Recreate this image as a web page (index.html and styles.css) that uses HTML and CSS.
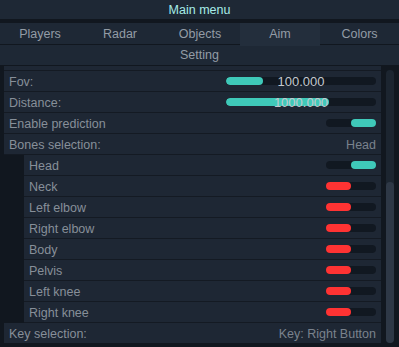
FILE: index.html
```html
<!DOCTYPE html>
<html lang="en">
<head>
    <meta charset="UTF-8">
    <title>Main menu</title>
    <link rel="stylesheet" href="styles.css">
</head>
<body>
    <div class="title">Main menu</div>

    <div class="tabs">
        <div class="tab">Players</div>
        <div class="tab">Radar</div>
        <div class="tab">Objects</div>
        <div class="tab active">Aim</div>
        <div class="tab">Colors</div>
    </div>

    <div class="section">Setting</div>

    <div class="panel">
        <div class="list">
            <div class="band"></div>

            <div class="row">
                <span>Fov:</span>
                <div class="slider">
                    <div class="slider-track"><div class="slider-fill" style="width: 37px"></div></div>
                    <span class="slider-value">100.000</span>
                </div>
            </div>
            <div class="row">
                <span>Distance:</span>
                <div class="slider">
                    <div class="slider-track"><div class="slider-fill" style="width: 103px"></div></div>
                    <span class="slider-value">1000.000</span>
                </div>
            </div>
            <div class="row">
                <span>Enable prediction</span>
                <div class="toggle on"><div class="knob"></div></div>
            </div>
            <div class="row">
                <span>Bones selection:</span>
                <span class="value">Head</span>
            </div>

            <div class="row sub">
                <span>Head</span>
                <div class="toggle on"><div class="knob"></div></div>
            </div>
            <div class="row sub">
                <span>Neck</span>
                <div class="toggle off"><div class="knob"></div></div>
            </div>
            <div class="row sub">
                <span>Left elbow</span>
                <div class="toggle off"><div class="knob"></div></div>
            </div>
            <div class="row sub">
                <span>Right elbow</span>
                <div class="toggle off"><div class="knob"></div></div>
            </div>
            <div class="row sub">
                <span>Body</span>
                <div class="toggle off"><div class="knob"></div></div>
            </div>
            <div class="row sub">
                <span>Pelvis</span>
                <div class="toggle off"><div class="knob"></div></div>
            </div>
            <div class="row sub">
                <span>Left knee</span>
                <div class="toggle off"><div class="knob"></div></div>
            </div>
            <div class="row sub">
                <span>Right knee</span>
                <div class="toggle off"><div class="knob"></div></div>
            </div>

            <div class="row last">
                <span>Key selection:</span>
                <span class="value">Key: Right Button</span>
            </div>
        </div>

        <div class="scrollbar">
            <div class="scroll-track">
                <div class="scroll-thumb"></div>
            </div>
        </div>
    </div>
</body>
</html>
```

FILE: styles.css
```css
body {
    margin: 0;
    height: 347px;
    overflow: hidden;
    background-color: #11171f;
    font-family: 'Liberation Sans', Arial, sans-serif;
    font-size: 12px;
    color: #878f99;
}

.title {
    height: 19px;
    line-height: 21px;
    text-align: center;
    background-color: #1e2835;
    color: #a6ece8;
    font-size: 12.5px;
    margin-bottom: 4px;
}

.tabs {
    display: grid;
    grid-template-columns: 80px 80px 80px 80px 79px;
    height: 21px;
    background-color: #1e2835;
    border-bottom: 1px solid #11171f;
}

.tab {
    text-align: center;
    line-height: 23px;
    font-size: 12.5px;
    color: #939ca6;
}

.tab.active {
    background-color: #232e3c;
}

.section {
    height: 20px;
    line-height: 21px;
    text-align: center;
    font-size: 12.5px;
    color: #939ca6;
    background-color: #1e2835;
    border-bottom: 1px solid #11171f;
}

.panel {
    display: flex;
}

.list {
    flex: 1;
    margin-left: 4px;
    display: flex;
    flex-direction: column;
}

.band {
    height: 4px;
    background-color: #1e2734;
    border-bottom: 1px solid #141a23;
}

.row {
    display: flex;
    align-items: center;
    justify-content: space-between;
    box-sizing: border-box;
    height: 21px;
    padding: 1px 5px 0 5px;
    background-color: #1e2734;
    border-bottom: 1px solid #141a23;
    font-size: 12.5px;
}

.row.sub {
    margin-left: 20px;
}

.row.last {
    border-bottom: none;
    height: 20px;
}

.value {
    color: #7a828d;
}

.slider {
    display: grid;
    width: 150px;
    margin-top: -1px;
    align-items: center;
    justify-items: center;
}

.slider-track,
.slider-value {
    grid-area: 1 / 1;
}

.slider-track {
    width: 100%;
    height: 8px;
    border-radius: 4px;
    background-color: #111821;
    overflow: hidden;
}

.slider-fill {
    height: 100%;
    border-radius: 4px;
    background-color: #3fc9b9;
}

.slider-value {
    color: #c4c9cf;
    font-size: 13px;
    line-height: 14px;
    padding-top: 1px;
}

.toggle {
    display: flex;
    width: 50px;
    height: 8px;
    margin-top: -1px;
    border-radius: 4px;
    background-color: #111821;
}

.toggle.on {
    justify-content: flex-end;
}

.knob {
    width: 25px;
    height: 100%;
    border-radius: 4px;
}

.toggle.on .knob {
    background-color: #3fc9b9;
}

.toggle.off .knob {
    background-color: #ff3333;
}

.scrollbar {
    width: 8px;
    padding: 4px 5px 0 5px;
    display: flex;
}

.scroll-track {
    flex: 1;
    display: flex;
    flex-direction: column;
    justify-content: flex-end;
    border-radius: 4px;
    background-color: #1c2530;
}

.scroll-thumb {
    height: 161px;
    border-radius: 4px;
    background-color: #2e3846;
}
```
